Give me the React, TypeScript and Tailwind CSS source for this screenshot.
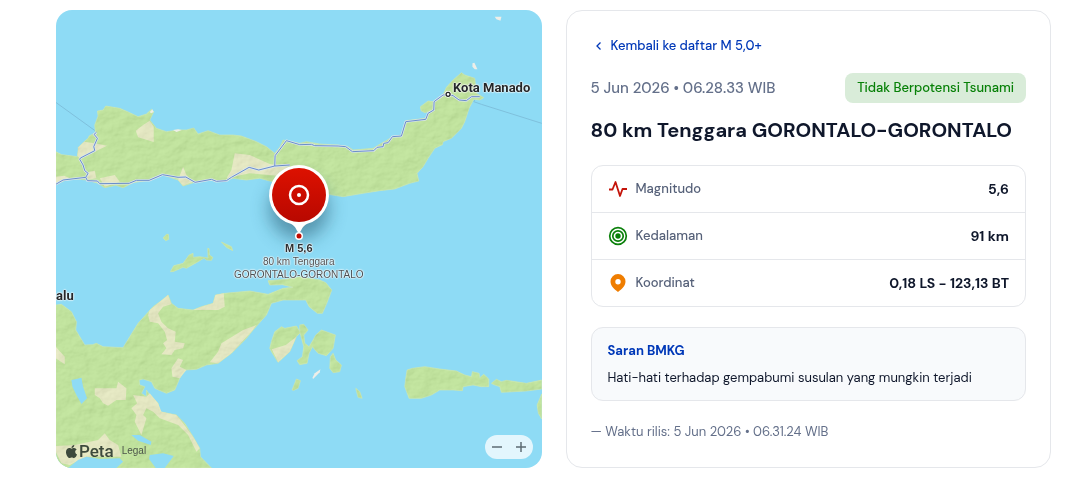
import React from "react";
import { FaApple } from "react-icons/fa";

const LAND_NORTH =
  "M0 425L18 434L35 436L65 440L68 412L85 395L98 384L100 378L119 368L117 345L127 318L125 303L142 300L150 288L192 295L222 308L247 320L272 312L287 298L294 305L282 330L302 355L332 365L367 360L392 360L414 354L427 372L457 362L492 375L532 375L557 378L602 395L632 410L657 430L672 412L682 390L732 400L752 395L792 402L847 405L877 410L892 420L952 415L977 400L1012 380L1037 375L1050 332L1107 325L1132 300L1135 273L1162 255L1172 232L1192 210L1217 188L1227 195L1257 205L1262 250L1284 263L1272 270L1254 268L1240 295L1227 335L1217 355L1187 385L1162 395L1160 404L1137 415L1117 445L1102 470L1084 490L1089 513L1062 520L1017 537L972 542L922 550L862 560L817 553L732 530L642 513L612 505L572 510L532 505L492 515L462 510L422 515L382 528L367 510L322 495L282 510L232 518L202 533L180 526L147 533L127 520L92 510L42 505L0 523Z";

const LAND_SOUTH =
  "M0 885L17 883L47 905L62 935L60 960L87 1005L110 1004L122 1000L142 1010L202 1013L222 980L247 940L292 890L320 870L337 855L347 880L367 895L412 900L437 890L472 880L479 855L507 850L582 843L637 853L682 835L712 832L680 824L642 825L637 812L690 808L732 800L792 810L810 818L828 840L815 875L800 910L785 910L760 890L750 870L717 870L682 870L647 880L632 915L592 960L572 985L527 1030L487 1060L452 1065L422 1078L387 1080L372 1105L357 1140L332 1150L297 1135L287 1115L262 1107L250 1110L252 1125L267 1130L257 1150L272 1160L272 1140L282 1155L307 1180L312 1205L362 1215L387 1240L412 1280L432 1315L434 1340L467 1374L0 1374Z";

const ISLANDS = [
  "M647 995L657 965L677 950L687 955L722 948L734 968L722 980L702 1025L667 1057L647 1025L642 1015Z",
  "M732 945L744 943L757 960L744 975L747 1000L760 1010L772 990L780 975L797 960L839 975L832 1015L812 1037L787 1030L770 1010L760 1030L754 1060L732 1064L724 1052L740 1040L744 1010L732 965Z",
  "M824 1040L832 1030L840 1050L857 1065L852 1085L832 1088L822 1075Z",
  "M900 1135L912 1145L919 1165L907 1162Z",
  "M709 1140L722 1107L734 1112L727 1135L714 1141Z",
  "M1050 1105L1054 1080L1070 1075L1107 1070L1152 1077L1202 1083L1227 1095L1247 1100L1250 1085L1270 1090L1272 1103L1284 1093L1299 1107L1299 1130L1277 1130L1252 1125L1222 1130L1220 1142L1192 1140L1152 1140L1127 1155L1097 1165L1060 1165L1047 1130Z",
  "M1307 1120L1322 1108L1337 1115L1352 1111L1412 1120L1458 1110L1458 1137L1412 1143L1337 1147L1332 1130L1312 1123Z",
  "M1458 1152L1444 1185L1448 1210L1458 1227Z",
  "M344 785L354 767L382 760L400 735L412 730L412 742L432 740L457 744L456 715L460 716L461 735L471 742L467 751L452 750L445 744L422 758L392 775L382 772L352 785Z",
  "M497 696L527 710L531 722L512 712Z",
  "M322 684L332 673L338 673L339 688L330 692Z",
  "M1094 290L1117 273L1134 275L1132 300L1107 308L1096 302Z",
];

const LOWLANDS = [
  "M68 412L85 395L117 400L154 407L117 425L72 445L65 438Z",
  "M282 332L294 350L294 396L247 382L240 362L262 345Z",
  "M527 480L537 430L582 435L642 462L702 470L702 500L582 490L512 505Z",
  "M100 485L117 482L122 505L92 510Z",
  "M132 505L177 495L192 515L147 530Z",
  "M367 510L382 470L392 495L412 515L382 527Z",
  "M0 500L25 497L42 505L0 518Z",
  "M282 900L337 855L347 883L322 890L307 910L317 935L337 955L360 965L357 995L387 1000L382 1015L357 1020L347 1035L317 1033L332 1015L322 1000L334 990L327 965L307 940L282 935L277 915Z",
  "M479 855L504 850L507 890L487 900L412 900L437 890L472 880Z",
  "M602 945L587 965L527 1030L487 1060L462 1057L487 1025L497 1000L562 960Z",
  "M117 1135L182 1135L187 1115L212 1135L210 1170L182 1170L157 1187L142 1180L132 1165L117 1155Z",
  "M232 1155L272 1160L282 1150L307 1180L317 1205L362 1215L382 1240L412 1280L432 1315L422 1325L397 1275L367 1245L312 1225L292 1205L272 1195L262 1215L272 1225L257 1275L237 1235L242 1215L227 1195L244 1180Z",
  "M347 1075L367 1045L382 1050L372 1070L392 1080L372 1105L350 1100Z",
  "M0 1010L27 1040L27 1063L0 1045Z",
  "M0 1308L57 1305L127 1290L147 1270L162 1290L187 1305L197 1340L92 1340L42 1365L17 1360L0 1325Z",
  "M648 1018L690 1005L722 980L702 1025L667 1057Z",
];

const LAKES = [
  "M47 1110L62 1107L77 1103L82 1130L94 1165L77 1182L62 1155L50 1130Z",
  "M227 1275L252 1275L287 1295L285 1305L247 1292Z",
  "M282 1335L322 1330L354 1338L327 1374L300 1374L280 1347Z",
  "M37 1374L67 1350L92 1340L132 1347L192 1345L202 1355L182 1374Z",
];

const SANDBANKS = [
  "M1317 20L1337 20L1334 32L1322 28Z",
  "M1250 160L1256 158L1265 178L1257 178L1250 170Z",
  "M770 1103L777 1090L794 1078L792 1087L772 1107Z",
  "M352 360L367 358L378 360L362 366Z",
  "M282 306L290 298L294 306L286 310Z",
];

const ROADS = [
  "M0 523L22 510L90 502L97 490L87 482L82 465L72 448L74 444L117 422L114 410L125 385L115 373L122 367",
  "M90 502L95 512L125 513L132 521L220 520L242 511L280 511L320 494L367 502L390 501L418 517L467 508L482 514L512 512L527 502L580 472L609 480L657 468L658 437L692 392L732 404L767 403L777 407L847 408L870 410L890 425L954 422L964 412L982 410L984 400L997 398L1010 380L1037 378L1050 335L1110 328L1117 310L1134 300L1135 275L1162 255L1177 253L1192 257L1210 270L1232 272L1247 260L1272 260",
  "M657 468L702 465",
];

const FERRIES = ["M0 277L122 365", "M1262 260L1254 275L1277 283L1458 340"];

function MapTerrain() {
  return (
    <svg
      viewBox="0 0 1458 1374"
      preserveAspectRatio="xMidYMid slice"
      className="absolute inset-0 h-full w-full"
      aria-hidden="true"
    >
      <defs>
        <filter id="relief" x="0" y="0" width="100%" height="100%">
          <feTurbulence type="fractalNoise" baseFrequency="0.022 0.03" numOctaves="4" seed="7" result="noise" />
          <feDiffuseLighting in="noise" surfaceScale="7" lightingColor="#ffffff" result="light">
            <feDistantLight azimuth="225" elevation="42" />
          </feDiffuseLighting>
        </filter>
        <clipPath id="land">
          {[LAND_NORTH, LAND_SOUTH, ...ISLANDS].map((d) => (
            <path key={d} d={d} />
          ))}
        </clipPath>
      </defs>
      <g stroke="#7fc0dc" strokeWidth="3" fill="none">
        {FERRIES.map((d) => (
          <path key={d} d={d} />
        ))}
      </g>
      <g fill="#bce493" stroke="#cde8ae" strokeWidth="2" strokeLinejoin="round">
        {[LAND_NORTH, LAND_SOUTH, ...ISLANDS].map((d) => (
          <path key={d} d={d} />
        ))}
      </g>
      <g fill="#e5e9be">
        {LOWLANDS.map((d) => (
          <path key={d} d={d} />
        ))}
      </g>
      <g clipPath="url(#land)">
        <rect width="1458" height="1374" filter="url(#relief)" className="opacity-15 mix-blend-soft-light" />
      </g>
      <g fill="#8edbf5">
        {LAKES.map((d) => (
          <path key={d} d={d} />
        ))}
      </g>
      <g fill="#eeeee8">
        {SANDBANKS.map((d) => (
          <path key={d} d={d} />
        ))}
      </g>
      <g fill="none" strokeLinejoin="round">
        {ROADS.map((d) => (
          <path key={d} d={d} stroke="#dce7ee" strokeWidth="7" />
        ))}
        {ROADS.map((d) => (
          <path key={d} d={d} stroke="#6a8ecb" strokeWidth="3" />
        ))}
      </g>
      <circle cx="1177" cy="253" r="10" fill="#ffffff" />
      <circle cx="1177" cy="253" r="6" fill="#ffffff" stroke="#1f2326" strokeWidth="4" />
    </svg>
  );
}

const HALO =
  "[text-shadow:0_0_2px_#fff,0_0_2px_#fff,0_0_1px_#fff,0_0_1px_#fff]";

function QuakeMarker() {
  return (
    <div className="absolute top-1/2 left-1/2 flex w-40 -translate-x-1/2 -translate-y-20 flex-col items-center">
      <svg width="100" height="83" viewBox="0 0 100 83" className="overflow-visible" aria-hidden="true">
        <defs>
          <linearGradient id="pin" x1="0" y1="0" x2="0" y2="1">
            <stop offset="0" stopColor="#dd1100" />
            <stop offset="1" stopColor="#b80800" />
          </linearGradient>
          <filter id="soft" x="-50%" y="-50%" width="200%" height="200%">
            <feGaussianBlur stdDeviation="9" />
          </filter>
        </defs>
        <circle cx="50" cy="50" r="30" fill="#1c4f66" opacity="0.5" filter="url(#soft)" />
        <path
          d="M50 6a30 30 0 0 1 9 58.600C54 66.500 53 70 51.500 72.500a1.800 1.800 0 0 1-3 0C47 70 46 66.500 41 64.600A30 30 0 0 1 50 6Z"
          fill="#ffffff"
        />
        <circle cx="50" cy="36" r="27" fill="url(#pin)" />
        <circle cx="50" cy="36" r="9" fill="none" stroke="#ffffff" strokeWidth="2.500" />
        <circle cx="50" cy="36" r="2" fill="#ffffff" />
        <circle cx="50" cy="77" r="4" fill="#ffffff" />
        <circle cx="50" cy="77" r="2.500" fill="#c00a00" />
      </svg>
      <p className={`text-center text-[11px] leading-[13px] font-bold text-[#2c3033] ${HALO}`}>M 5,6</p>
      <p className={`text-center text-[10px] leading-[13px] text-[#4a5054] ${HALO}`}>
        80 km Tenggara
        <br />
        <span className="whitespace-nowrap">GORONTALO-GORONTALO</span>
      </p>
    </div>
  );
}

function QuakeMap() {
  return (
    <section
      aria-label="Peta"
      className="relative min-h-96 overflow-hidden rounded-2xl bg-[#8edbf5] font-['Liberation_Sans',sans-serif]"
    >
      <MapTerrain />
      <span
        className={`absolute top-[70px] left-[397px] font-[Roboto,sans-serif] text-[13px] leading-4 font-bold text-[#23272a] ${HALO}`}
      >
        Kota Manado
      </span>
      <span
        className={`absolute top-[278px] left-0 font-[Roboto,sans-serif] text-[13px] leading-4 font-bold text-[#23272a] ${HALO}`}
      >
        alu
      </span>
      <QuakeMarker />
      <div className="absolute bottom-2 left-2 flex items-center text-[#3d4a3c]">
        <FaApple className="size-[15px]" aria-hidden="true" />
        <span className="font-[Roboto,sans-serif] text-[17px] leading-[18px] font-medium">Peta</span>
        <a href="#legal" className="ml-2 text-[10px] leading-3 text-[#4c554a]">
          Legal
        </a>
      </div>
      <div className="absolute right-[9px] bottom-[9px] flex h-6 w-12 rounded-full bg-white/75 text-[#5c6b73]">
        <button type="button" aria-label="Perkecil" className="flex flex-1 items-center justify-center">
          <svg width="12" height="12" viewBox="0 0 12 12" stroke="currentColor" strokeWidth="1.500">
            <path d="M1 6H11" />
          </svg>
        </button>
        <button type="button" aria-label="Perbesar" className="flex flex-1 items-center justify-center">
          <svg width="12" height="12" viewBox="0 0 12 12" stroke="currentColor" strokeWidth="1.500">
            <path d="M1 6H11M6 1V11" />
          </svg>
        </button>
      </div>
    </section>
  );
}

const magnitudeIcon = (
  <svg width="20" height="20" viewBox="0 0 20 20" fill="none" stroke="#c4140a" strokeWidth="1.800" strokeLinejoin="round" aria-hidden="true">
    <path d="M1 10.500H4.500L7.500 3L12 17L14.500 10H19" />
  </svg>
);

const depthIcon = (
  <svg width="20" height="20" viewBox="0 0 20 20" fill="none" stroke="#0b800b" strokeWidth="1.700" aria-hidden="true">
    <circle cx="10" cy="10" r="8.300" />
    <circle cx="10" cy="10" r="5.200" />
    <circle cx="10" cy="10" r="2.700" fill="#0b800b" stroke="none" />
  </svg>
);

const coordinateIcon = (
  <svg width="20" height="20" viewBox="0 0 20 20" aria-hidden="true">
    <path
      fillRule="evenodd"
      fill="#ef7d00"
      d="M10 1a7.500 7.500 0 0 0-7.500 7.500c0 4.500 3.500 7.500 7.500 10.500c4-3 7.500-6 7.500-10.500A7.500 7.500 0 0 0 10 1Zm0 5a2.700 2.700 0 1 1 0 5.400a2.700 2.700 0 0 1 0-5.400Z"
    />
  </svg>
);

const details = [
  { label: "Magnitudo", value: "5,6", icon: magnitudeIcon },
  { label: "Kedalaman", value: "91 km", icon: depthIcon },
  { label: "Koordinat", value: "0,18 LS - 123,13 BT", icon: coordinateIcon },
];

function QuakeDetails() {
  return (
    <article className="rounded-2xl border border-gray-200 p-6">
      <a href="#daftar" className="flex items-center gap-1 text-[13px] leading-[22px] font-medium text-[#0038b8]">
        <svg width="16" height="16" viewBox="0 0 16 16" fill="none" stroke="currentColor" strokeWidth="1.300" aria-hidden="true">
          <path d="M9.500 4.500L6 8L9.500 11.500" />
        </svg>
        Kembali ke daftar M 5,0+
      </a>
      <div className="mt-4 flex items-center justify-between gap-2">
        <p className="text-[15px] leading-6 font-medium text-[#64708a]">5 Jun 2026 • 06.28.33 WIB</p>
        <span className="rounded-lg bg-[#d9ecd9] px-3 text-[13px] leading-[30px] font-medium text-[#078007]">
          Tidak Berpotensi Tsunami
        </span>
      </div>
      <h1 className="mt-3 text-[20px] leading-[30px] font-bold text-slate-900">
        80 km Tenggara GORONTALO-GORONTALO
      </h1>
      <div className="mt-5 rounded-xl border border-gray-200">
        <table className="w-full border-collapse">
          <tbody className="divide-y divide-gray-200">
            {details.map(({ label, value, icon }) => (
              <tr key={label}>
                <th scope="row" className="py-3 pl-4 text-left font-medium">
                  <span className="flex items-center gap-2 text-[13px] leading-[22px] text-[#566179]">
                    {icon}
                    {label}
                  </span>
                </th>
                <td className="py-3 pr-4 text-right text-[14px] leading-[22px] font-bold text-slate-900">{value}</td>
              </tr>
            ))}
          </tbody>
        </table>
      </div>
      <section className="mt-5 rounded-xl border border-gray-200 bg-slate-50 px-4 py-3">
        <h2 className="text-[13px] leading-[21px] font-bold text-[#0038b8]">Saran BMKG</h2>
        <p className="mt-[6px] text-[13px] leading-[21px] text-slate-900">
          Hati-hati terhadap gempabumi susulan yang mungkin terjadi
        </p>
      </section>
      <p className="mt-5 text-[13px] leading-[22px] text-[#64708a]">— Waktu rilis: 5 Jun 2026 • 06.31.24 WIB</p>
    </article>
  );
}

export default function App() {
  return (
    <main className="bg-white py-[10px] pr-4 pl-14 font-['DM_Sans',Inter,sans-serif]">
      <div className="grid grid-cols-2 gap-6">
        <QuakeMap />
        <QuakeDetails />
      </div>
    </main>
  );
}
